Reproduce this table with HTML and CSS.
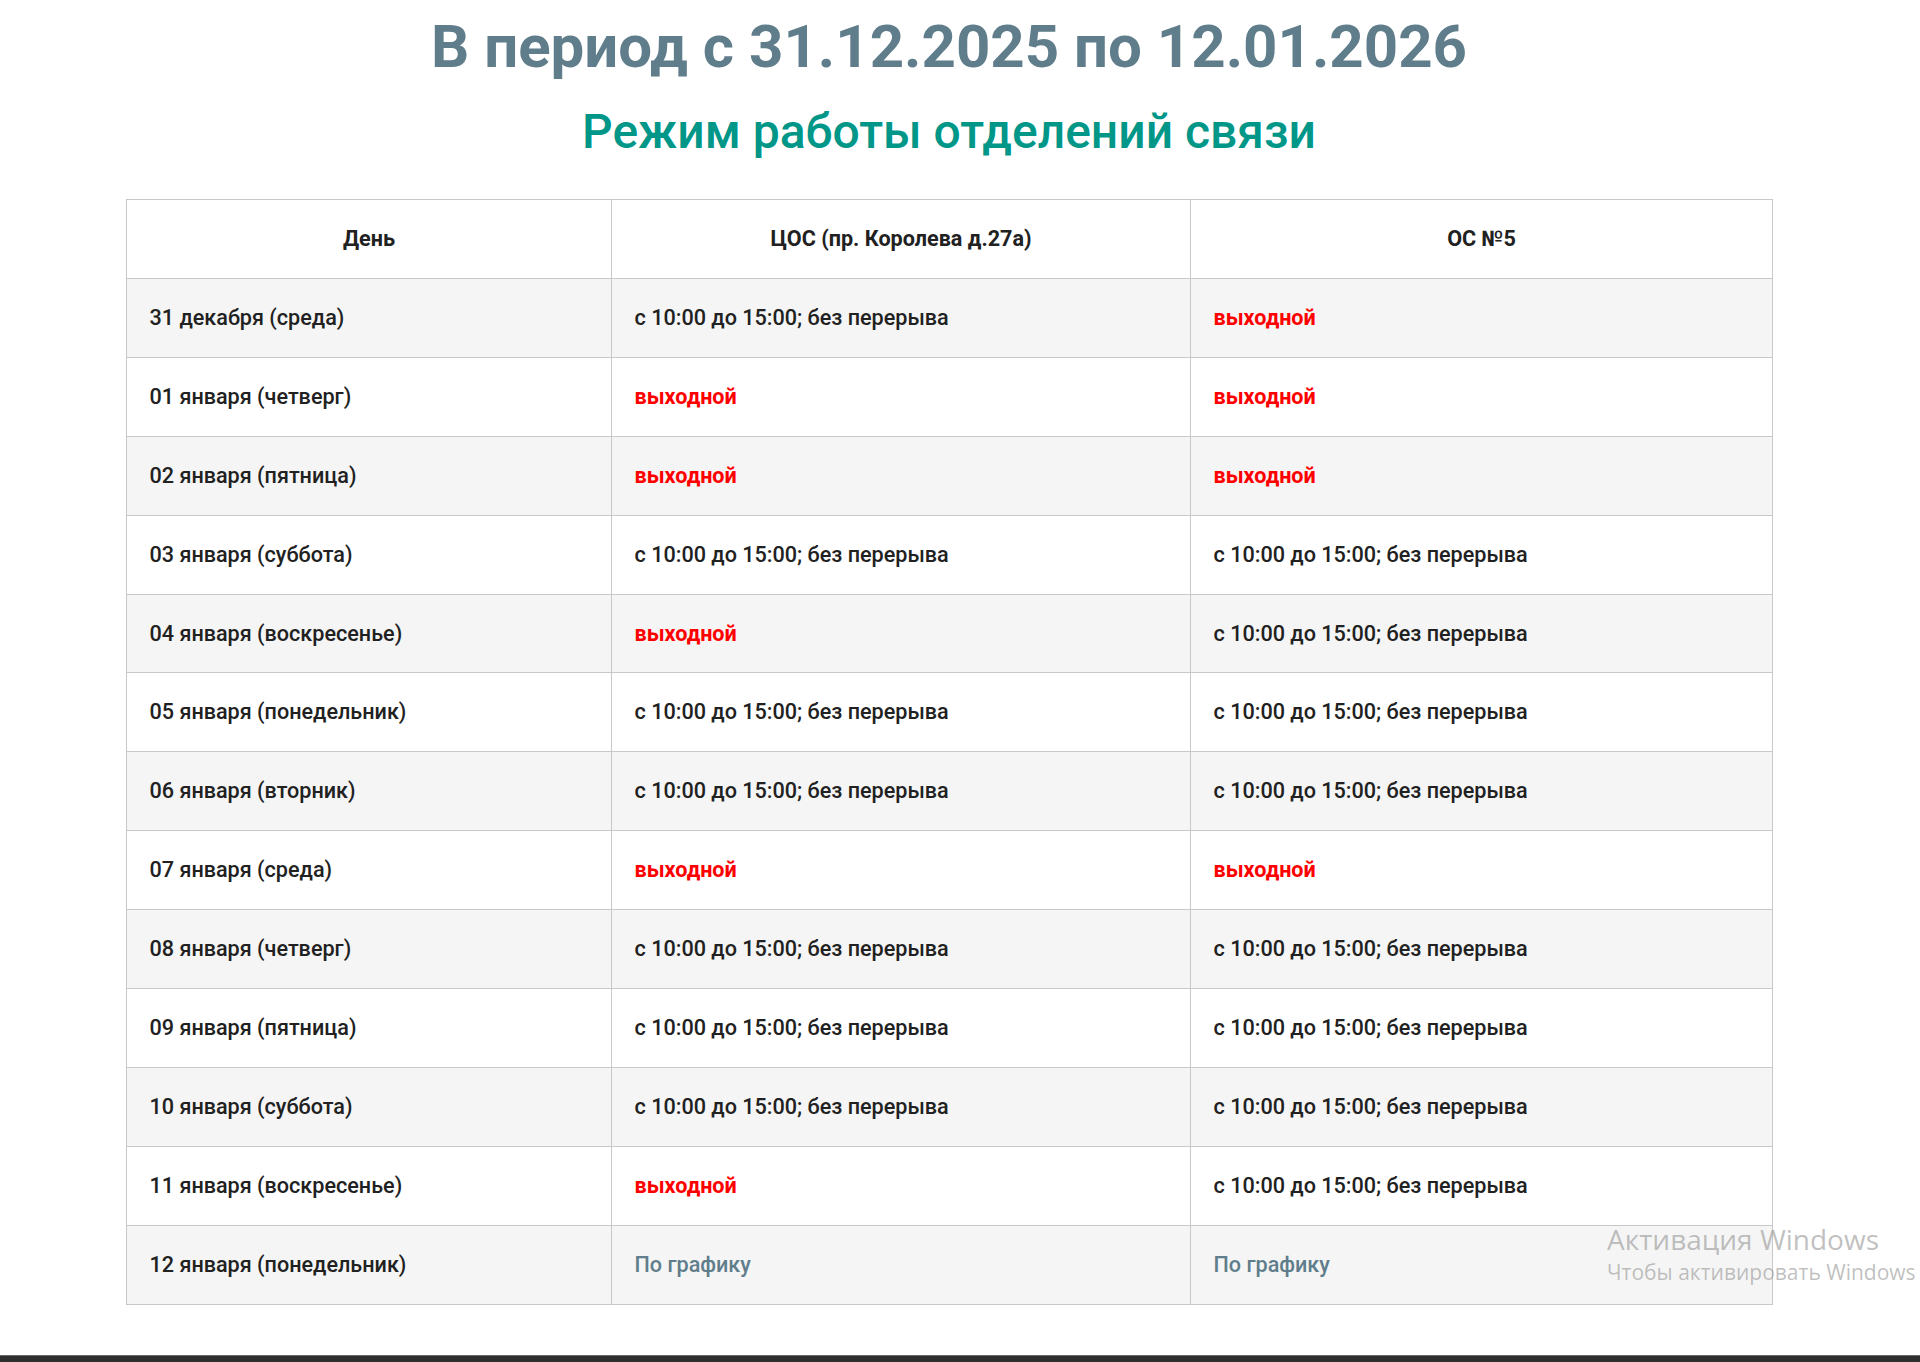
FILE: index.html
```html
<!DOCTYPE html>
<html lang="ru">
<head>
<meta charset="utf-8">
<title>Режим работы отделений связи</title>
<link rel="stylesheet" href="styles.css">
</head>
<body>
<main class="page">
  <h1 class="title">В период с 31.12.2025 по 12.01.2026</h1>
  <h2 class="subtitle">Режим работы отделений связи</h2>
  <table class="schedule">
    <colgroup>
      <col class="col-day">
      <col class="col-cos">
      <col class="col-os">
    </colgroup>
    <thead>
      <tr><th>День</th><th>ЦОС (пр. Королева д.27а)</th><th>ОС №5</th></tr>
    </thead>
    <tbody>
      <tr><td>31 декабря (среда)</td><td>с 10:00 до 15:00; без перерыва</td><td class="off">выходной</td></tr>
      <tr><td>01 января (четверг)</td><td class="off">выходной</td><td class="off">выходной</td></tr>
      <tr><td>02 января (пятница)</td><td class="off">выходной</td><td class="off">выходной</td></tr>
      <tr><td>03 января (суббота)</td><td>с 10:00 до 15:00; без перерыва</td><td>с 10:00 до 15:00; без перерыва</td></tr>
      <tr><td>04 января (воскресенье)</td><td class="off">выходной</td><td>с 10:00 до 15:00; без перерыва</td></tr>
      <tr><td>05 января (понедельник)</td><td>с 10:00 до 15:00; без перерыва</td><td>с 10:00 до 15:00; без перерыва</td></tr>
      <tr><td>06 января (вторник)</td><td>с 10:00 до 15:00; без перерыва</td><td>с 10:00 до 15:00; без перерыва</td></tr>
      <tr><td>07 января (среда)</td><td class="off">выходной</td><td class="off">выходной</td></tr>
      <tr><td>08 января (четверг)</td><td>с 10:00 до 15:00; без перерыва</td><td>с 10:00 до 15:00; без перерыва</td></tr>
      <tr><td>09 января (пятница)</td><td>с 10:00 до 15:00; без перерыва</td><td>с 10:00 до 15:00; без перерыва</td></tr>
      <tr><td>10 января (суббота)</td><td>с 10:00 до 15:00; без перерыва</td><td>с 10:00 до 15:00; без перерыва</td></tr>
      <tr><td>11 января (воскресенье)</td><td class="off">выходной</td><td>с 10:00 до 15:00; без перерыва</td></tr>
      <tr><td>12 января (понедельник)</td><td class="sched">По графику</td><td class="sched">По графику</td></tr>
    </tbody>
  </table>
</main>
<div class="footer-bar"></div>
<div class="watermark">
  <div class="wm-title">Активация Windows</div>
  <div class="wm-sub">Чтобы активировать Windows</div>
</div>
</body>
</html>
```

FILE: styles.css
```css
html, body {
  margin: 0;
  padding: 0;
  background: #ffffff;
}
body {
  font-family: Roboto, "Liberation Sans", sans-serif;
  color: #212121;
  width: 1920px;
  height: 1362px;
  overflow: hidden;
  position: relative;
  display: flex;
  flex-direction: column;
}
.page {
  width: 1898px;
  flex: 1;
  display: flex;
  flex-direction: column;
  align-items: center;
}
.title {
  margin: 14px 0 0;
  font-size: 60px;
  line-height: 66px;
  font-weight: 700;
  color: #607d8b;
}
.subtitle {
  margin: 26px 0 0;
  font-size: 48px;
  line-height: 52px;
  font-weight: 500;
  color: #009688;
}
.schedule {
  margin-top: 41px;
  width: 1646px;
  border-collapse: collapse;
  table-layout: fixed;
  border: 1px solid #c8c8c8;
}
.col-day { width: 485px; }
.col-cos { width: 579px; }
.col-os { width: 582px; }
.schedule th,
.schedule td {
  border: 1px solid #c8c8c8;
  padding: 24px 22px 24px 23px;
  font-size: 21.6px;
  line-height: 29.9px;
  font-weight: 500;
  text-align: left;
  color: #212121;
}
.schedule th {
  text-align: center;
  font-weight: 700;
  background: #ffffff;
}
.schedule tbody tr:nth-child(odd) td {
  background: #f5f5f5;
}
.schedule tbody tr:nth-child(even) td {
  background: #ffffff;
}
.schedule td.off {
  color: #ff0000;
  font-weight: 700;
}
.schedule td.sched {
  color: #607d8b;
}
.footer-bar {
  height: 6px;
  background: #2e2e2e;
  border-top: 1px solid #6a6a6a;
}
.watermark {
  position: absolute;
  left: 1607px;
  top: 1220px;
  color: rgba(150, 150, 150, 0.6);
  font-family: "Open Sans", "Noto Sans", sans-serif;
  white-space: nowrap;
}
.wm-title {
  font-size: 28px;
  line-height: 38px;
}
.wm-sub {
  font-size: 21px;
  line-height: 28px;
}
```
